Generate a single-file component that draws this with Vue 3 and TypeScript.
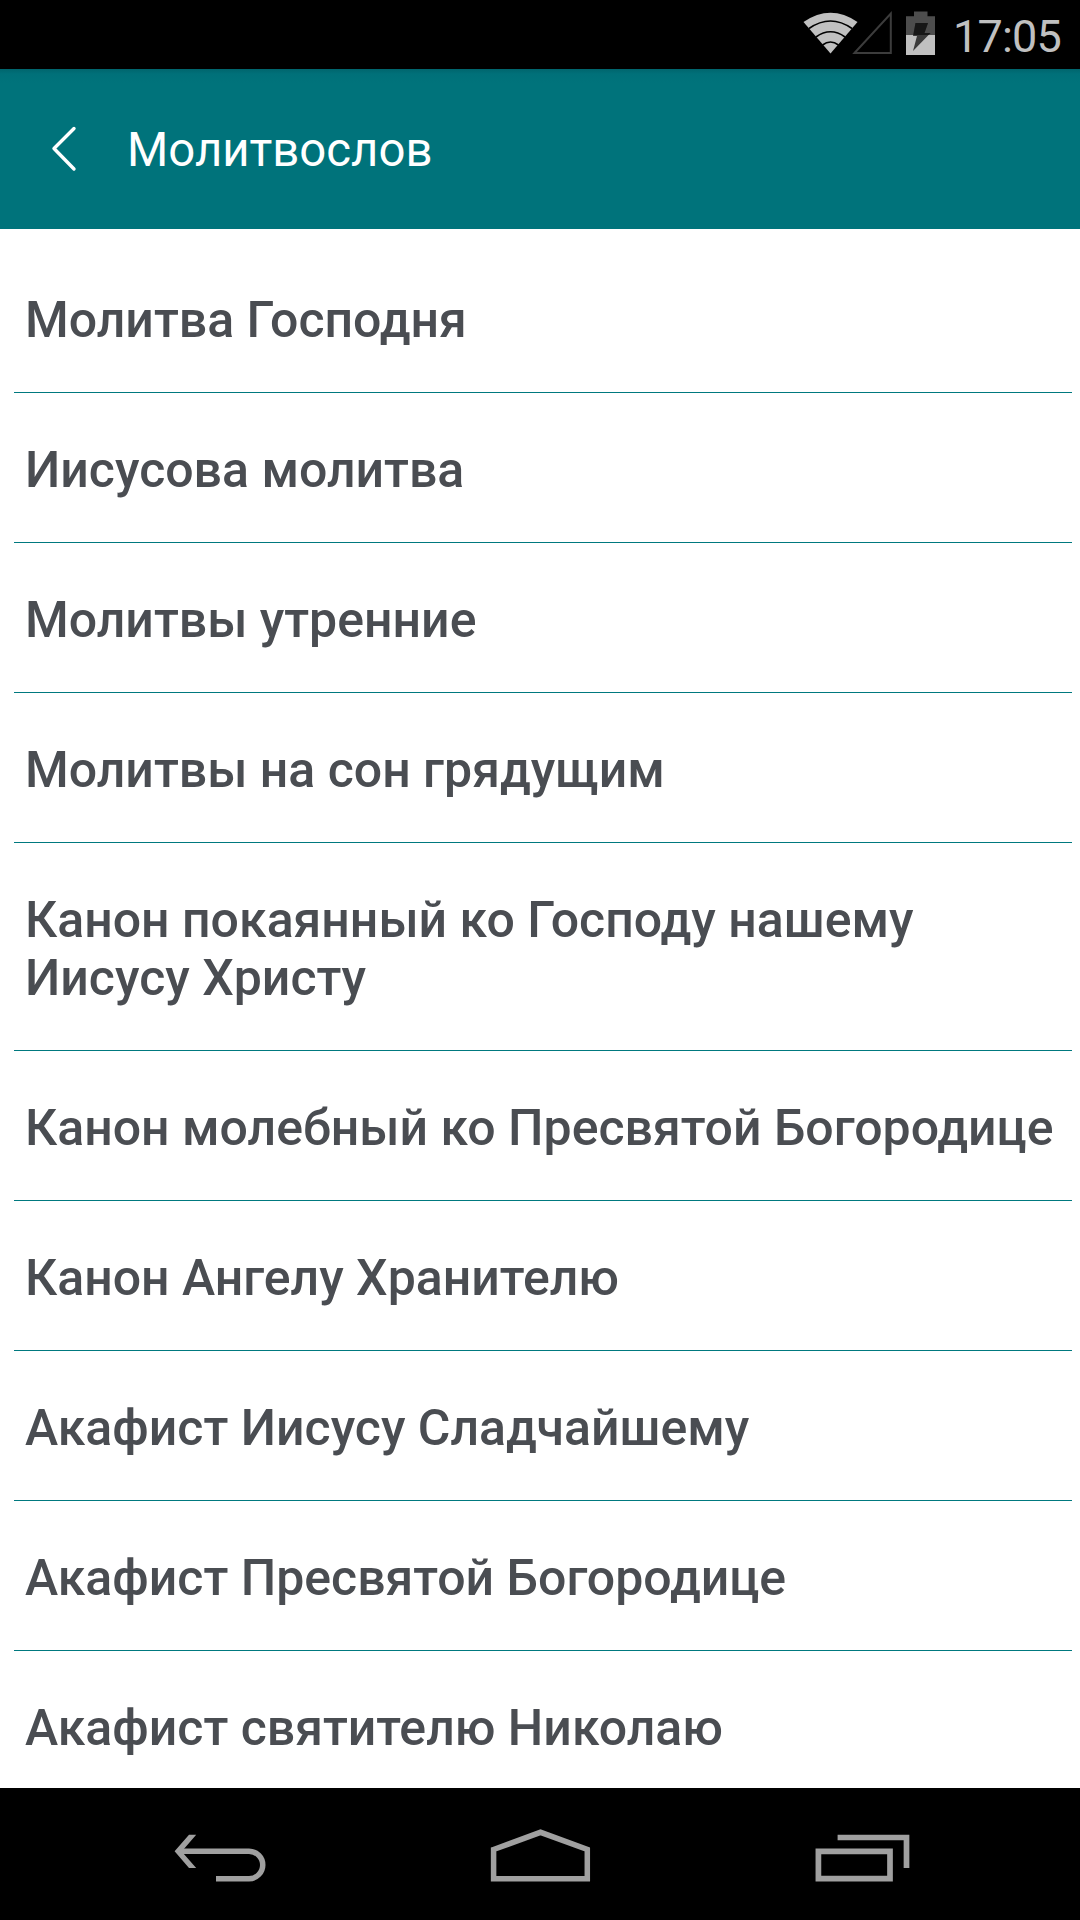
<script setup lang="ts">
const prayers: string[] = [
  'Молитва Господня',
  'Иисусова молитва',
  'Молитвы утренние',
  'Молитвы на сон грядущим',
  'Канон покаянный ко Господу нашему Иисусу Христу',
  'Канон молебный ко Пресвятой Богородице',
  'Канон Ангелу Хранителю',
  'Акафист Иисусу Сладчайшему',
  'Акафист Пресвятой Богородице',
  'Акафист святителю Николаю',
]
</script>

<template>
  <div class="screen">
    <div class="status">
      <svg class="indicators" width="140" height="69" viewBox="0 0 140 69">
        <path d="M3.500 22Q30.500 3.500 57.500 22L30.500 53.500Z" fill="#c0c0c0" />
        <g fill="none" stroke="#000" stroke-width="1.600">
          <path d="M9 28.500Q30.500 13.500 52 28.500" />
          <path d="M16 37Q30.500 26.500 45 37" />
          <path d="M22.500 45Q30.500 39 38.500 45" />
        </g>
        <path d="M54.500 53L90.800 13.500V53Z" fill="none" stroke="#3c3c3c" stroke-width="2" />
        <path d="M106 35V16.300H114V11.500H127.500V16.300H135V35Z" fill="#4d4d4d" />
        <path d="M106 35H135V55H106Z" fill="#c0c0c0" />
        <path d="M115.500 23H128L124.500 33H130.500L113 51L117 36H113Z" fill="#3a3a3a" />
        <path d="M115.500 23H128L124.500 33H130.500L128.500 35H113.300Z" fill="#171717" />
      </svg>
      <span class="clock">17:05</span>
    </div>
    <header class="bar">
      <svg class="back" width="26" height="46" viewBox="0 0 26 46">
        <path d="M23 2.500L3 22.500L23 43" fill="none" stroke="#fff" stroke-width="3.400" stroke-linecap="round" stroke-linejoin="round" />
      </svg>
      <h1 class="title">Молитвослов</h1>
    </header>
    <ul class="list">
      <li v-for="prayer in prayers" :key="prayer" class="item">{{ prayer }}</li>
    </ul>
    <nav class="nav">
      <svg width="100" height="132" viewBox="0 0 100 132" fill="none" stroke="#a0a0a0" stroke-width="5.500">
        <path d="M10 63.200H79A13.700 13.700 0 0 1 79 90.700H46" />
        <path d="M19 46.800H26.200L13 62V65L26.200 80H19L4.600 63.200Z" fill="#a0a0a0" stroke="none" />
      </svg>
      <svg width="108" height="132" viewBox="0 0 108 132" fill="none" stroke="#a0a0a0" stroke-width="5.500">
        <path d="M7.600 61.500L54.500 44.300L101.300 61.500V90.700H7.600Z" />
      </svg>
      <svg width="100" height="132" viewBox="0 0 100 132" fill="none" stroke="#a0a0a0" stroke-width="5.700">
        <path d="M3.400 63.300H75V90.600H3.400Z" />
        <path d="M22.600 49.500H91.500V80" />
      </svg>
    </nav>
  </div>
</template>

<style>
body {
  margin: 0;
  background: #fff;
}
</style>

<style scoped>
.screen {
  width: 1080px;
  height: 1920px;
  display: flex;
  flex-direction: column;
  overflow: hidden;
  background: #fff;
  font-family: Roboto, sans-serif;
}
.status {
  flex: none;
  height: 69px;
  box-sizing: border-box;
  padding-left: 800px;
  display: flex;
  background: #000;
}
.indicators {
  flex: none;
}
.clock {
  margin: 7px 0 0 13px;
  font-size: 45px;
  line-height: 60px;
  letter-spacing: -0.8px;
  color: #c0c0c0;
}
.bar {
  flex: none;
  height: 160px;
  box-sizing: border-box;
  padding-left: 51px;
  display: flex;
  align-items: flex-start;
  background: linear-gradient(#00656d, #007079 5px, #00737b 14px);
}
.back {
  flex: none;
  margin-top: 57px;
}
.title {
  margin: 53px 0 0 50px;
  font-size: 47.300px;
  line-height: 56px;
  font-weight: 400;
  color: #fff;
}
.list {
  flex: 1;
  min-height: 0;
  overflow: hidden;
  margin: 0;
  padding: 14px 8px 0 14px;
  list-style: none;
}
.item {
  padding: 48px 0 43px 11px;
  border-bottom: 1px solid #00797f;
  font-size: 50px;
  line-height: 58px;
  font-weight: 500;
  color: #4a4d52;
}
.nav {
  flex: none;
  height: 132px;
  display: flex;
  padding-left: 170px;
  background: #000;
}
.nav svg:nth-child(2) {
  margin-left: 216px;
}
.nav svg:nth-child(3) {
  margin-left: 221px;
}
</style>
